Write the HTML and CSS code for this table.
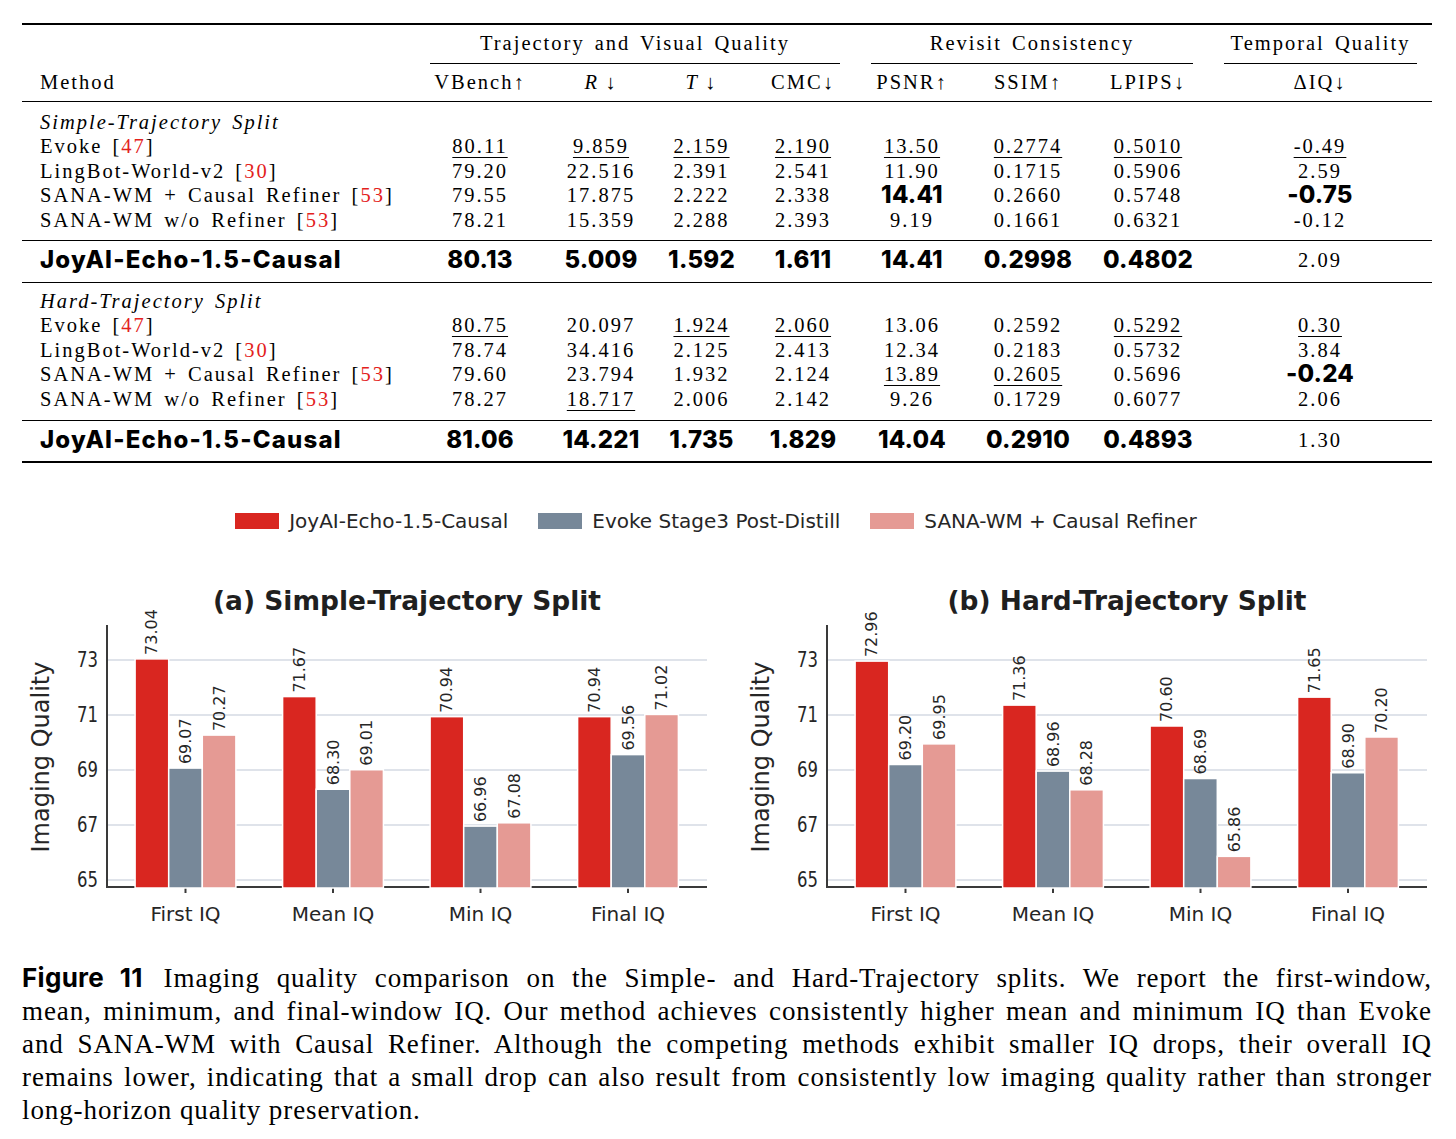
FILE: index.html
```html
<!DOCTYPE html>
<html lang="en">
<head>
    <meta charset="UTF-8">
    <meta name="viewport" content="width=device-width, initial-scale=1.0">
    <title>Imaging quality comparison</title>
    <link rel="stylesheet" href="styles.css">
</head>
<body>
    <main class="page">
        <section class="results">
            <div class="groups">
                <div class="group">Trajectory and Visual Quality</div>
                <div class="group">Revisit Consistency</div>
                <div class="group">Temporal Quality</div>
            </div>
            <div class="row head">
                <span class="method">Method</span>
                <span>VBench↑</span>
                <span><i>R</i>&thinsp;↓</span>
                <span><i>T</i>&thinsp;↓</span>
                <span>CMC↓</span>
                <span>PSNR↑</span>
                <span>SSIM↑</span>
                <span>LPIPS↓</span>
                <span>ΔIQ↓</span>
            </div>

            <div class="block">
                <div class="row"><span class="method split">Simple-Trajectory Split</span></div>
                <div class="row">
                    <span class="method">Evoke [<span class="cite">47</span>]</span>
                    <span><u>80.11</u></span><span><u>9.859</u></span><span><u>2.159</u></span><span><u>2.190</u></span>
                    <span><u>13.50</u></span><span><u>0.2774</u></span><span><u>0.5010</u></span><span><u>-0.49</u></span>
                </div>
                <div class="row">
                    <span class="method">LingBot-World-v2 [<span class="cite">30</span>]</span>
                    <span>79.20</span><span>22.516</span><span>2.391</span><span>2.541</span>
                    <span>11.90</span><span>0.1715</span><span>0.5906</span><span>2.59</span>
                </div>
                <div class="row">
                    <span class="method">SANA-WM + Causal Refiner [<span class="cite">53</span>]</span>
                    <span>79.55</span><span>17.875</span><span>2.222</span><span>2.338</span>
                    <span class="best">14.41</span><span>0.2660</span><span>0.5748</span><span class="best">-0.75</span>
                </div>
                <div class="row">
                    <span class="method">SANA-WM w/o Refiner [<span class="cite">53</span>]</span>
                    <span>78.21</span><span>15.359</span><span>2.288</span><span>2.393</span>
                    <span>9.19</span><span>0.1661</span><span>0.6321</span><span>-0.12</span>
                </div>
            </div>
            <div class="row ours">
                <span class="method">JoyAI-Echo-1.5-Causal</span>
                <span>80.13</span><span>5.009</span><span>1.592</span><span>1.611</span>
                <span>14.41</span><span>0.2998</span><span>0.4802</span><span class="plain">2.09</span>
            </div>

            <div class="block hard">
                <div class="row"><span class="method split">Hard-Trajectory Split</span></div>
                <div class="row">
                    <span class="method">Evoke [<span class="cite">47</span>]</span>
                    <span><u>80.75</u></span><span>20.097</span><span><u>1.924</u></span><span><u>2.060</u></span>
                    <span>13.06</span><span>0.2592</span><span><u>0.5292</u></span><span><u>0.30</u></span>
                </div>
                <div class="row">
                    <span class="method">LingBot-World-v2 [<span class="cite">30</span>]</span>
                    <span>78.74</span><span>34.416</span><span>2.125</span><span>2.413</span>
                    <span>12.34</span><span>0.2183</span><span>0.5732</span><span>3.84</span>
                </div>
                <div class="row">
                    <span class="method">SANA-WM + Causal Refiner [<span class="cite">53</span>]</span>
                    <span>79.60</span><span>23.794</span><span>1.932</span><span>2.124</span>
                    <span><u>13.89</u></span><span><u>0.2605</u></span><span>0.5696</span><span class="best">-0.24</span>
                </div>
                <div class="row">
                    <span class="method">SANA-WM w/o Refiner [<span class="cite">53</span>]</span>
                    <span>78.27</span><span><u>18.717</u></span><span>2.006</span><span>2.142</span>
                    <span>9.26</span><span>0.1729</span><span>0.6077</span><span>2.06</span>
                </div>
            </div>
            <div class="row ours end">
                <span class="method">JoyAI-Echo-1.5-Causal</span>
                <span>81.06</span><span>14.221</span><span>1.735</span><span>1.829</span>
                <span>14.04</span><span>0.2910</span><span>0.4893</span><span class="plain">1.30</span>
            </div>
        </section>

        <div class="legend">
            <div class="legend-item"><span class="swatch red"></span>JoyAI-Echo-1.5-Causal</div>
            <div class="legend-item"><span class="swatch slate"></span>Evoke Stage3 Post-Distill</div>
            <div class="legend-item"><span class="swatch pink"></span>SANA-WM + Causal Refiner</div>
        </div>

        <div class="charts">
            <div class="chart" id="chart-simple"></div>
            <div class="chart" id="chart-hard"></div>
        </div>

        <p class="caption">
            <span class="line"><b class="fig">Figure 11</b> Imaging quality comparison on the Simple- and Hard-Trajectory splits. We report the first-window,</span>
            <span class="line">mean, minimum, and final-window IQ. Our method achieves consistently higher mean and minimum IQ than Evoke</span>
            <span class="line">and SANA-WM with Causal Refiner. Although the competing methods exhibit smaller IQ drops, their overall IQ</span>
            <span class="line">remains lower, indicating that a small drop can also result from consistently low imaging quality rather than stronger</span>
            <span class="line last">long-horizon quality preservation.</span>
        </p>
    </main>

    <script src="chart.js"></script>
</body>
</html>
```

FILE: styles.css
```css
/* figure 11 page: table + two bar charts + caption */
:root {
    --ink: #000;
    --cite: #e3211c;
    --red: #d92620;
    --slate: #778899;
    --pink: #e59a94;
    --chart-ink: #262626;
    --cols: 408px 110px 111px 101px 105px 113px 118px 146px 198px;
}

body {
    margin: 0;
    background: #fff;
    color: var(--ink);
}

.page {
    width: 1456px;
    padding-top: 23px;
}

/* ---- results table ---- */

.results {
    width: 1410px;
    margin-left: 22px;
    border-top: 2px solid var(--ink);
    border-bottom: 2px solid var(--ink);
    font-family: "Liberation Serif", "Times New Roman", serif;
    font-size: 20.5px;
    letter-spacing: 2px;
    word-spacing: 3px;
}

.groups {
    display: grid;
    grid-template-columns: 410px 322px 193px;
    column-gap: 31px;
    padding-left: 408px;
}

.group {
    text-align: center;
    line-height: 24px;
    padding: 6px 0 8px;
    border-bottom: 1px solid var(--ink);
}

.row {
    display: grid;
    grid-template-columns: var(--cols);
    line-height: 24.6px;
}

.row > span {
    display: flex;
    justify-content: center;
    white-space: nowrap;
}

.row > span:nth-child(2) { padding-right: 10px; }
.row > span:nth-child(3) { padding-left: 11px; }
.row > span:nth-child(5),
.row > span:nth-child(6) { padding-right: 3px; }
.row > span:nth-child(7) { padding-right: 2px; }
.row > span:nth-child(8),
.row > span:nth-child(9) { padding-right: 26px; }

.row > .method {
    display: block;
    padding-left: 18px;
    text-align: left;
}

.row.head {
    line-height: 24px;
    padding: 6px 0 7px;
    border-bottom: 1px solid var(--ink);
}

.split {
    font-style: italic;
}

.cite {
    color: var(--cite);
}

u {
    text-decoration-thickness: 1px;
    text-underline-offset: 4px;
}

.block {
    padding: 7.7px 0 7.3px;
}

.block.hard {
    padding: 5.7px 0 8.3px;
}

.best,
.row.ours {
    font-family: Inter, "Liberation Sans", sans-serif;
    font-weight: 800;
    font-size: 24px;
    letter-spacing: 0.2px;
}

.row.ours {
    line-height: 24px;
    padding: 7px 0 10px;
    border-top: 1px solid var(--ink);
    border-bottom: 1px solid var(--ink);
}

.row.ours.end {
    padding-bottom: 9px;
    border-bottom: 0;
}

.row.ours .method {
    letter-spacing: 1.2px;
}

.row.ours .plain {
    font-family: "Liberation Serif", "Times New Roman", serif;
    font-weight: 400;
    font-size: 20.5px;
    letter-spacing: 2px;
}

/* ---- legend ---- */

.legend {
    width: 1432px;
    margin-top: 46px;
    display: flex;
    justify-content: center;
    gap: 30px;
    font-family: "DejaVu Sans", sans-serif;
    font-size: 20px;
    line-height: 24px;
    color: var(--chart-ink);
}

.legend-item {
    display: flex;
    align-items: center;
}

.swatch {
    width: 44px;
    height: 16px;
    margin-right: 10px;
}

.swatch.red { background: var(--red); }
.swatch.slate { background: var(--slate); }
.swatch.pink { background: var(--pink); }

/* ---- charts ---- */

.charts {
    display: flex;
    margin-top: 37px;
}

.chart {
    width: 720px;
    height: 360px;
}

.plot {
    display: block;
}

.plot text {
    font-family: "DejaVu Sans", sans-serif;
    fill: var(--chart-ink);
}

.plot .grid {
    stroke: #dfe3ea;
    stroke-width: 2;
}

.plot .spine {
    stroke: #3a3a3a;
    stroke-width: 2;
}

.plot .bar {
    stroke: #fff;
    stroke-width: 1.5;
}

.plot .ytick {
    font-size: 21px;
    text-anchor: end;
    dominant-baseline: central;
}

.plot .xtick {
    font-size: 20px;
    text-anchor: middle;
    dominant-baseline: central;
}

.plot .value {
    font-size: 16px;
    dominant-baseline: central;
}

.plot .ylabel {
    font-size: 24px;
    text-anchor: middle;
    dominant-baseline: central;
}

.plot .title {
    font-size: 27px;
    font-weight: bold;
    text-anchor: middle;
    dominant-baseline: central;
    fill: #1f1f1f;
}

/* ---- caption ---- */

.caption {
    width: 1410px;
    margin: 31px 0 0 22px;
    font-family: "Liberation Serif", "Times New Roman", serif;
    font-size: 27px;
    line-height: 33px;
    letter-spacing: 0.9px;
}

.caption .line {
    display: block;
    text-align: justify;
    text-align-last: justify;
}

.caption .line.last {
    text-align-last: left;
}

.fig {
    font-family: Inter, "Liberation Sans", sans-serif;
    font-weight: 700;
    font-size: 26px;
    letter-spacing: 0.3px;
    margin-right: 4px;
}
```

FILE: chart.js
```js
// bar charts for figure 11 (imaging quality per split)
var COLORS = ['#d92620', '#778899', '#e59a94'];
var GROUPS = ['First IQ', 'Mean IQ', 'Min IQ', 'Final IQ'];
var TICKS = [65, 67, 69, 71, 73];

var CHARTS = [
    {
        id: 'chart-simple',
        title: '(a) Simple-Trajectory Split',
        titleWidth: 388,
        data: [[73.04, 69.07, 70.27], [71.67, 68.30, 69.01], [70.94, 66.96, 67.08], [70.94, 69.56, 71.02]]
    },
    {
        id: 'chart-hard',
        title: '(b) Hard-Trajectory Split',
        titleWidth: 359,
        data: [[72.96, 69.20, 69.95], [71.36, 68.96, 68.28], [70.60, 68.69, 65.86], [71.65, 68.90, 70.20]]
    }
];

var AXIS = { left: 107, right: 707, top: 55, bottom: 317 };
var BAR_W = 33.6;
var GROUP_X = [185.5, 333, 480.5, 628];

function yFor(v) {
    return 310 - (v - 65) * 27.5;
}

function line(cls, x1, y1, x2, y2) {
    return '<line class="' + cls + '" x1="' + x1 + '" y1="' + y1 + '" x2="' + x2 + '" y2="' + y2 + '"/>';
}

function renderChart(chart) {
    var svg = '<svg class="plot" xmlns="http://www.w3.org/2000/svg" width="720" height="360" viewBox="0 0 720 360">';

    TICKS.forEach(function (t) {
        var y = yFor(t);
        svg += line('grid', AXIS.left, y, AXIS.right, y);
        svg += '<text class="ytick" x="98" y="' + y + '" textLength="21" lengthAdjust="spacingAndGlyphs">' + t + '</text>';
    });

    svg += line('spine', AXIS.left, AXIS.top, AXIS.left, AXIS.bottom + 1);
    svg += line('spine', AXIS.left, AXIS.bottom, AXIS.right, AXIS.bottom);

    chart.data.forEach(function (values, g) {
        var cx = GROUP_X[g];
        svg += line('spine', cx, AXIS.bottom, cx, AXIS.bottom + 6);
        svg += '<text class="xtick" x="' + cx + '" y="344">' + GROUPS[g] + '</text>';

        values.forEach(function (v, i) {
            var mid = cx + (i - 1) * BAR_W;
            var top = yFor(v);
            svg += '<rect class="bar" x="' + (mid - BAR_W / 2) + '" y="' + top + '" width="' + BAR_W +
                '" height="' + (AXIS.bottom + 1 - top) + '" fill="' + COLORS[i] + '"/>';
            svg += '<text class="value" transform="translate(' + mid + ' ' + (top - 4) + ') rotate(-90)">' +
                v.toFixed(2) + '</text>';
        });
    });

    svg += '<text class="ylabel" transform="translate(41 187) rotate(-90)">Imaging Quality</text>';
    svg += '<text class="title" x="407" y="30" textLength="' + chart.titleWidth +
        '" lengthAdjust="spacingAndGlyphs">' + chart.title + '</text>';
    svg += '</svg>';

    document.getElementById(chart.id).innerHTML = svg;
}

CHARTS.forEach(renderChart);
```
